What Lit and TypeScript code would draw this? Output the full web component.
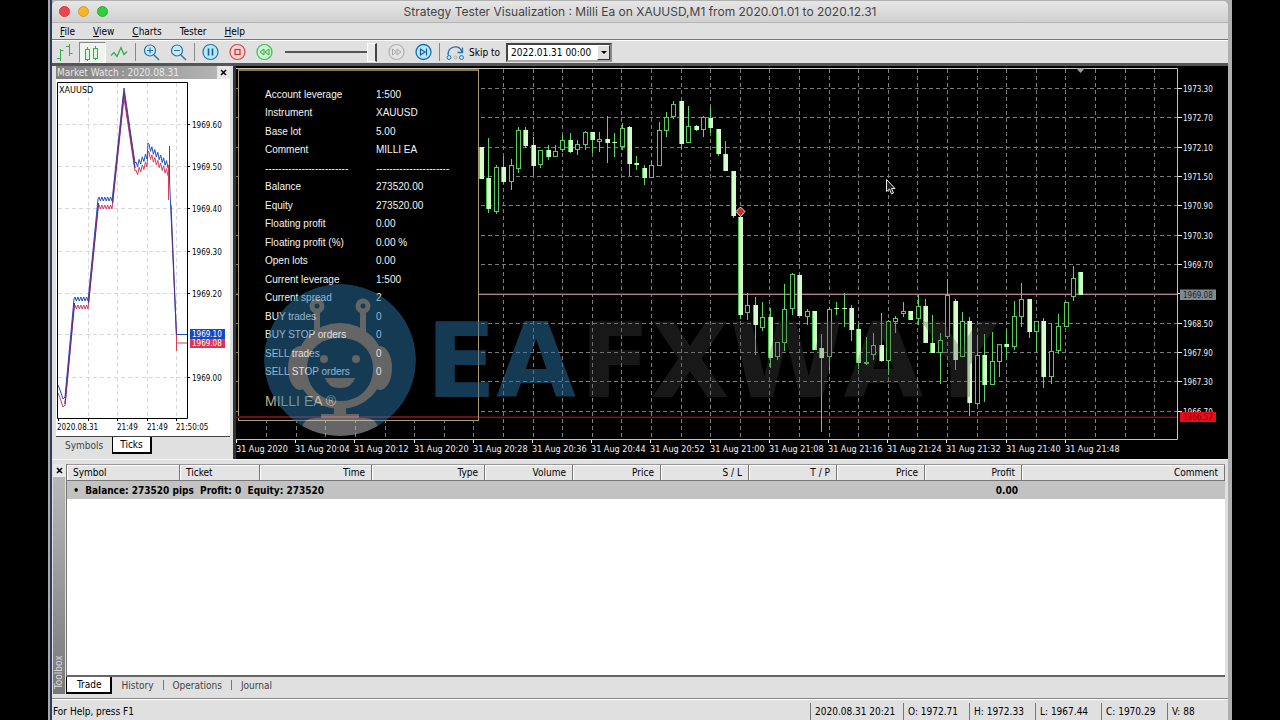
import { LitElement, html, css, svg } from "lit";
import { customElement, state } from "lit/decorators.js";

const UI_FONT = css`"DejaVu Sans Condensed", "DejaVu Sans", sans-serif`;

/* high, body top, body bottom, low, 1 = falling (solid) */
type Candle = [number, number, number, number, number];

const FIRST_BAR = -35;
const CANDLES: Candle[] = [
  [147, 147, 179, 179, 1], [138, 178, 209, 213, 1], [165, 167, 212, 214, 0], [156, 167, 182, 184, 1],
  [159, 165, 182, 190, 0], [127, 130, 169, 173, 0], [127, 130, 146, 148, 1], [137, 145, 166, 175, 1],
  [150, 150, 165, 168, 0], [145, 150, 157, 160, 1], [145, 151, 157, 157, 0], [135, 140, 150, 152, 0],
  [133, 140, 152, 153, 1], [140, 144, 150, 155, 0], [131, 132, 145, 150, 0], [132, 132, 140, 153, 1],
  [132, 139, 142, 152, 0], [116, 139, 143, 163, 1], [133, 142, 143, 157, 1], [123, 128, 147, 150, 0],
  [126, 127, 164, 176, 1], [156, 163, 165, 170, 1], [165, 168, 178, 185, 1], [161, 165, 178, 178, 0],
  [122, 130, 166, 166, 0], [112, 117, 131, 137, 0], [101, 104, 117, 119, 0], [101, 101, 144, 149, 1],
  [106, 126, 143, 143, 0], [125, 126, 130, 131, 1], [116, 117, 130, 137, 0], [107, 118, 128, 133, 1],
  [129, 129, 154, 156, 1], [141, 154, 171, 171, 1], [171, 171, 216, 218, 1], [216, 217, 315, 319, 1],
  [293, 305, 313, 320, 0], [297, 305, 325, 355, 1], [302, 317, 328, 331, 0], [308, 317, 358, 368, 1],
  [342, 342, 357, 360, 0], [284, 309, 343, 351, 0], [273, 274, 309, 315, 0], [274, 275, 316, 316, 1],
  [309, 311, 317, 325, 0], [311, 311, 350, 350, 1], [334, 348, 358, 432, 1], [307, 309, 357, 370, 0],
  [302, 308, 309, 315, 1], [293, 308, 309, 327, 1], [305, 308, 330, 341, 1], [324, 329, 363, 369, 1],
  [337, 362, 364, 365, 0], [333, 345, 355, 360, 0], [313, 345, 361, 362, 1], [320, 321, 361, 375, 0],
  [316, 318, 322, 333, 0], [302, 311, 314, 317, 0], [311, 311, 320, 320, 1], [295, 306, 319, 325, 0],
  [299, 306, 343, 343, 1], [315, 343, 353, 353, 1], [333, 340, 353, 384, 0], [279, 295, 337, 339, 0],
  [299, 301, 360, 370, 1], [312, 321, 357, 357, 0], [317, 321, 403, 416, 1], [335, 355, 404, 405, 0],
  [334, 355, 385, 402, 1], [332, 361, 385, 385, 0], [344, 344, 362, 377, 0], [329, 344, 347, 360, 1],
  [301, 316, 347, 350, 0], [283, 299, 317, 327, 0], [299, 299, 332, 338, 1], [321, 321, 332, 352, 0],
  [318, 321, 377, 388, 1], [323, 351, 377, 384, 0], [314, 326, 351, 354, 0], [302, 302, 327, 327, 0],
  [266, 278, 297, 301, 0], [272, 272, 295, 295, 1],
];

const PRICES = ["1973.30", "1972.70", "1972.10", "1971.50", "1970.90", "1970.30", "1969.70", "", "1968.50", "1967.90", "1967.30", "1966.70"];
const TIMES = ["31 Aug 2020", "31 Aug 20:04", "31 Aug 20:12", "31 Aug 20:20", "31 Aug 20:28", "31 Aug 20:36", "31 Aug 20:44", "31 Aug 20:52", "31 Aug 21:00", "31 Aug 21:08", "31 Aug 21:16", "31 Aug 21:24", "31 Aug 21:32", "31 Aug 21:40", "31 Aug 21:48"];

const INFO: [string, string][] = [
  ["Account leverage", "1:500"], ["Instrument", "XAUUSD"], ["Base lot", "5.00"], ["Comment", "MILLI EA"],
  ["-------------------------", "----------------------"],
  ["Balance", "273520.00"], ["Equity", "273520.00"], ["Floating profit", "0.00"], ["Floating profit (%)", "0.00 %"],
  ["Open lots", "0.00"], ["Current leverage", "1:500"], ["Current spread", "2"], ["BUY trades", "0"],
  ["BUY STOP orders", "0"], ["SELL trades", "0"], ["SELL STOP orders", "0"],
];

@customElement("price-chart")
export class PriceChart extends LitElement {
  static styles = css`
    :host { display: block; position: relative; background: #000; overflow: hidden; }
    .plot { display: block; width: 100%; height: 100%; }
    .axis { font: 8px ${UI_FONT}; fill: #f2f2f2; }
    .time { font: 9px ${UI_FONT}; fill: #f2f2f2; }
    .on-bid { fill: #1c2228; }
    .on-stop { fill: #7c0000; }
    .brand { font: 700 103px "DejaVu Sans", sans-serif; font-kerning: none; }
    .panel {
      position: absolute; left: 2px; top: 3px; width: 241px; height: 352px; box-sizing: border-box;
      border: 1px solid #a89b72; border-top: 2px solid #8a7436; background: #000;
      padding: 14px 0 0 26px; color: #f4f4f4; font: 10px "Liberation Sans", Arial, sans-serif;
    }
    .facts { display: grid; grid-template-columns: 111px 1fr; grid-template-rows: repeat(16, 1fr); align-items: center; height: 296px; margin: 0; white-space: nowrap; overflow: hidden; }
    .facts dd { margin: 0; }
    .name { margin: 8px 0 0; font: 14px/24px "Liberation Sans", Arial, sans-serif; color: #c0b283; }
    .overlay { position: absolute; inset: 0; width: 100%; height: 100%; pointer-events: none; }
  `;

  render() {
    const gx = Array.from({ length: 31 }, (_, i) => Math.round(503.5 + 29.6 * (i - 8) - 0.5) + 0.5);
    const gy = PRICES.map((_, i) => Math.round(88.3 + 29.35 * i - 0.5) + 0.5);
    return html`
      <svg class="plot" viewBox="236 66 991 393" preserveAspectRatio="xMinYMin meet" role="img" aria-label="XAUUSD M1 candlestick chart">
        <g stroke="#7c7c7c" stroke-width="1" stroke-dasharray="4 3">
          ${gx.map((x) => svg`<line x1=${x} x2=${x} y1="69" y2="438" />`)}
          ${gy.map((y) => svg`<line x1="236" x2="1177" y1=${y} y2=${y} />`)}
        </g>
        <path d="M236 293.5H1178M236 417.5H1178" stroke="#8c1018" fill="none" />
        <path d="M236 416.5H1178" stroke="#3c0408" fill="none" />
        <path d="M236 294.5H1178" stroke="#b48088" fill="none" />
        <g shape-rendering="crispEdges">
          ${CANDLES.map(([h, t, b, l, solid], i) => {
            const x = Math.floor(740.5 + 7.4 * (FIRST_BAR + i));
            return svg`
              <rect x=${x} y=${h} width="1" height=${Math.max(1, l - h)} fill="#5cd65c" />
              ${solid
                ? svg`<rect x=${x - 2} y=${t} width="5" height=${Math.max(1, b - t)} fill="#48c848" />
                      <rect x=${x - 1} y=${t} width="4" height=${Math.max(1, b - t)} fill="#d2ffc8" />`
                : svg`<rect x=${x - 1.5} y=${t + 0.5} width="4" height=${Math.max(1, b - t - 1)} fill="#000" stroke="#58cc58" />`}`;
          })}
        </g>
        <path d="M236 68.5H1177.5V439.5H236" stroke="#c4c4c4" stroke-width="1" fill="none" />
        <path d="M1076 68h9l-4.500 5z" fill="#a0a0a0" />
        <path d="M740.500 207l4.500 4.500-4.500 5-4.500-5z" fill="#c03030" stroke="#f4dcdc" />
        ${gy.map((y, i) => svg`<path d="M1178 ${y}h4" stroke="#eee" /><text class="axis" x="1183" y=${y + 3}>${PRICES[i]}</text>`)}
        ${TIMES.map((t, i) => {
          const x = Math.round(236 + 59.2 * i);
          return svg`<path d="M${x + 0.5} 440v3" stroke="#eee" /><text class="time" x=${x} y="452">${t}</text>`;
        })}
        <rect x="1180" y="289" width="36" height="11" fill="#7e8a90" /><path d="M1180 289.500h36" stroke="#a01820" />
        <text class="axis on-bid" x="1183" y="298">1969.08</text>
        <rect x="1180" y="412" width="36" height="10" fill="#e80c1c" />
        <text class="axis on-stop" x="1183" y="420">1966.57</text>
      </svg>
      <section class="panel">
        <dl class="facts">${INFO.map(([k, v]) => html`<dt>${k}</dt><dd>${v}</dd>`)}</dl>
        <p class="name">MILLI EA ®</p>
      </section>
      <svg class="overlay" viewBox="236 66 991 393" preserveAspectRatio="xMinYMin meet">
        <path d="M238 417H478" stroke="#6c1018" stroke-width="2" />
        <clipPath id="disc"><circle cx="340" cy="360" r="76" /></clipPath>
        <g opacity=".5" clip-path="url(#disc)">
          <circle cx="340" cy="360" r="76" fill="#2874a8" />
          <g fill="#cacaca">
            <path d="M314 311h6v22h-6zM360 311h6v22h-6z" />
            <circle cx="317" cy="306" r="7.500" /><circle cx="363" cy="306" r="7.500" />
            <ellipse cx="300" cy="368" rx="12" ry="22" /><ellipse cx="380" cy="368" rx="12" ry="22" />
            <ellipse cx="340" cy="366" rx="44" ry="43" />
            <rect x="334" y="406" width="12" height="10" />
            <rect x="321" y="414" width="38" height="5" />
            <path d="M302 427q2-9 14-9h48q12 0 14 9v12h-76z" />
          </g>
          <g fill="#2874a8">
            <circle cx="317" cy="306" r="2.500" /><circle cx="363" cy="306" r="2.500" />
            <path d="M340 338c20 0 33 12 33 31s-14 32-33 32-33-13-33-32 13-31 33-31z" />
          </g>
          <g fill="#cacaca"><circle cx="324" cy="359" r="4" /><circle cx="356" cy="359" r="4" /><path d="M325 378h30q-3 10-15 10t-15-10z" /></g>
        </g>
        <text class="brand" x="426" y="397" fill="#2874a8" opacity=".5">EA</text>
        <text class="brand" x="580" y="397" fill="#525252" opacity=".3">FXWAY</text>
        <path d="M886.500 179.500v12l3-2.500 2 5 2-1-2-4.500h3.500z" fill="#222" stroke="#e8e8e8" />
      </svg>
    `;
  }
}

@customElement("tick-chart")
export class TickChart extends LitElement {
  static styles = css`
    :host { display: block; }
    .plot { display: block; width: 100%; }
    .label { font: 8px ${UI_FONT}; fill: #000; }
    .symbol { font: 9px ${UI_FONT}; fill: #000; }
    .inverse { fill: #fff; }
  `;

  private zigzag(x0: number, y0: number, x1: number, y1: number, amp: number) {
    const n = Math.round((x1 - x0) / 1.5);
    return Array.from({ length: n + 1 }, (_, i) => {
      const x = x0 + ((x1 - x0) * i) / n;
      const y = y0 + ((y1 - y0) * i) / n + (i % 2 ? amp : -amp);
      return `L${x.toFixed(1)} ${y.toFixed(1)}`;
    }).join("");
  }

  private series(d: number, peak: number) {
    return `M58 ${385 + d}L60 ${390 + d}L63 ${399 + d}L65 ${397 + d}L74 ${299 + d}` +
      this.zigzag(75, 299 + d, 88, 299 + d, 2) + `L98 ${199 + d}` +
      this.zigzag(99, 199 + d, 112, 199 + d, 2) + `L124 ${peak}L135 ${163 + d}` +
      this.zigzag(136, 165 + d, 147, 156 + d, 3) + `L148 ${143 + d}` +
      this.zigzag(149, 147 + d, 168, 165 + d, 3);
  }

  render() {
    const rows: [number, string][] = [[124.5, "1969.60"], [166.5, "1969.50"], [208.5, "1969.40"], [251.5, "1969.30"], [293.5, "1969.20"], [334.5, ""], [377.5, "1969.00"]];
    const cols: [number, number, string][] = [[58.5, 57, "2020.08.31"], [88.5, 0, ""], [117.5, 117, "21:49"], [147.5, 147, "21:49"], [176.5, 176, "21:50:05"]];
    return html`
      <svg class="plot" viewBox="56 81 174 355" role="img" aria-label="XAUUSD ticks">
        <g stroke="#d8d8d8" stroke-dasharray="4 3">
          ${rows.map(([y]) => svg`<line x1="58" x2="187" y1=${y} y2=${y} />`)}
          ${cols.slice(1).map(([x]) => svg`<line x1=${x} x2=${x} y1="83" y2="418" />`)}
        </g>
        <path d=${this.series(8, 98)} fill="none" stroke="#d83c58" />
        <path d=${this.series(0, 88)} fill="none" stroke="#1c50c8" />
        <path d="M65 404L74.500 303M88.500 303L98.500 203M112.500 203L124 92L135 168" fill="none" stroke="#6c2c80" stroke-width="1.300" />
        <path d="M168.500 165v35" stroke="#d83c58" /><path d="M169.500 146v34L176.500 338V334.500H187" fill="none" stroke="#1c50c8" />
        <path d="M171 205L176.500 335" stroke="#5c2a80" /><path d="M176.500 335v16V343H187" stroke="#d83c58" fill="none" />
        <path d="M57.500 82.500H187.500V418.500H57.500z" fill="none" stroke="#000" />
        ${rows.map(([y, t]) => t ? svg`<path d="M187 ${y}h3" stroke="#000" /><text class="label" x="192" y=${y + 3}>${t}</text>` : "")}
        ${cols.map(([x, tx, t]) => svg`<path d="M${x} 418v3" stroke="#000" /><text class="label" x=${tx} y="430">${t}</text>`)}
        <rect x="190" y="339" width="35" height="9" fill="#dc3454" /><rect x="190" y="329" width="35" height="10" fill="#1448cc" />
        <text class="label inverse" x="192" y="337">1969.10</text><text class="label inverse" x="192" y="346">1969.08</text>
        <text class="symbol" x="59" y="93">XAUUSD</text>
      </svg>`;
  }
}

const glyph = {
  bars: svg`<g stroke="#2fae4a" fill="none"><path d="M5.500 7v12M2 16.500h3.500M5.500 8.500h3M14.500 2v12M11 4.500h3.500M14.500 11.500h3" /></g>`,
  candles: svg`<g stroke="#2fae4a" fill="#d8f8d8"><path d="M5.500 4v14M13.500 3v14" /><rect x="3.500" y="6.500" width="4" height="10" /><rect x="11.500" y="5.500" width="4" height="10" /></g>`,
  line: svg`<path d="M2 13.500l3-3 3 4 4-9 3 7 3-3" fill="none" stroke="#2fae4a" stroke-width="1.300" />`,
  zoomIn: svg`<path d="M13 13l5 5" stroke="#3a78a8" stroke-width="1.600" /><circle cx="9" cy="8.500" r="5.500" fill="#c4ecfc" stroke="#2a6ea4" stroke-width="1.200" /><path d="M6 8.500h6M9 5.500v6" stroke="#2a6ea4" stroke-width="1.200" />`,
  zoomOut: svg`<path d="M13 13l5 5" stroke="#3a78a8" stroke-width="1.600" /><circle cx="9" cy="8.500" r="5.500" fill="#c4ecfc" stroke="#2a6ea4" stroke-width="1.200" /><path d="M6 8.500h6" stroke="#2a6ea4" stroke-width="1.200" />`,
  pause: svg`<circle cx="10.500" cy="10" r="7.500" fill="#b4e8fc" stroke="#2a72a8" stroke-width="1.200" /><path d="M8.500 6.500v7M12.500 6.500v7" stroke="#1c5c94" stroke-width="1.600" />`,
  stop: svg`<circle cx="10.500" cy="10" r="7.500" fill="#fcd4d4" stroke="#cc4848" stroke-width="1.200" /><rect x="8" y="7.500" width="5" height="5" fill="none" stroke="#cc3030" stroke-width="1.200" />`,
  slower: svg`<circle cx="10.500" cy="10" r="7.500" fill="#ccfad0" stroke="#38b850" stroke-width="1.200" /><path d="M10 7v6l-4-3zM15 7v6l-4-3z" fill="none" stroke="#2ca444" />`,
  faster: svg`<circle cx="10.500" cy="10" r="7.500" fill="#e4e4e4" stroke="#b0b0b0" stroke-width="1.200" /><path d="M6.500 7v6l4-3zM11 7v6l4-3z" fill="none" stroke="#a8a8a8" />`,
  next: svg`<circle cx="10.500" cy="10" r="7.500" fill="#b4e8fc" stroke="#1c70ac" stroke-width="1.300" /><path d="M7.500 7v6l4.500-3zM13.500 6.500v7" fill="none" stroke="#1c5c94" stroke-width="1.200" />`,
  skip: svg`<path d="M3 13c0-9 11-11 14-3M17.500 5.500v5h-5" fill="none" stroke="#2a72a8" stroke-width="1.300" /><circle cx="4" cy="15.500" r="2" fill="#b4e8fc" stroke="#2a72a8" /><circle cx="10.500" cy="15.500" r="1.500" fill="none" stroke="#aaa" /><circle cx="16.500" cy="15.500" r="2" fill="#b4e8fc" stroke="#2a72a8" />`,
};

@customElement("app-root")
export class AppRoot extends LitElement {
  @state() private view = "Trade";

  static styles = css`
    :host { display: block; min-height: 100vh; background: #000; font: 10px ${UI_FONT}; color: #000; }
    * { box-sizing: border-box; }
    button, select { font: inherit; color: inherit; border: 0; background: none; padding: 0; margin: 0; }
    .desk { display: flex; flex-direction: column; min-height: 100vh; margin: 0 48px; padding: 1px 4px 0; background: linear-gradient(90deg, #a8a8a8 0 2px, #2c3c60 2px 4px, #b0b0b0 4px); }
    .window { flex: 1; display: flex; flex-direction: column; background: #e0e0e0; border-radius: 5px 5px 0 0; overflow: hidden; }
    .title { display: flex; align-items: center; height: 22px; border-bottom: 1px solid #b4b4b4; background: linear-gradient(#e6e6e6, #d0d0d0); }
    .lights { display: flex; gap: 8px; padding-left: 7px; width: 56px; }
    .light { width: 11px; height: 11px; border-radius: 50%; background: #ee4450; border: 1px solid #d43c46; }
    .light.amber { background: #f8b42c; border-color: #dc9c24; }
    .light.green { background: #34cc40; border-color: #28b034; }
    .caption { flex: 1; margin: 0; padding-right: 56px; text-align: center; font: 12px/21px Inter, Roboto, sans-serif; color: #444; }
    .menu { display: flex; gap: 18px; height: 17px; padding-left: 8px; align-items: center; border-bottom: 1px solid #777; }
    .menu u { text-underline-offset: 1px; }
    .tools { display: flex; align-items: center; height: 23px; border-top: 1px solid #fff; }
    .tool { width: 27px; height: 21px; display: grid; place-items: center; }
    .tool.on { background: #eef4ee; border: 1px solid #fff; border-top-color: #888; border-left-color: #888; }
    .tool svg { display: block; width: 21px; height: 21px; }
    .sep { width: 1px; height: 18px; margin: 0 2px; background: #888; }
    .speed { appearance: none; width: 92px; height: 20px; margin: 0 6px 0 7px; background: linear-gradient(#555, #555) center / 100% 2px no-repeat; }
    .speed::-webkit-slider-thumb { appearance: none; width: 10px; height: 19px; background: #e8e8e8; border: 1px solid #fff; border-right: 2px solid #444; }
    .skip { display: flex; align-items: center; gap: 6px; }
    .combo { position: relative; display: flex; width: 106px; height: 19px; background: #fff; border: 2px solid #444; border-right-color: #888; border-bottom-color: #aaa; }
    .combo select { appearance: none; flex: 1; padding-left: 3px; outline: none; }
    .drop { position: absolute; right: 0; top: 0; width: 13px; height: 15px; background: #e0e0e0; border: 1px solid #fff; border-right-color: #333; border-bottom-color: #333; pointer-events: none; }
    .drop::after { content: ""; position: absolute; left: 3px; top: 5px; border: 3px solid transparent; border-top-color: #000; border-bottom: 0; }
    .work { display: grid; grid-template-columns: 184px 1fr; grid-template-rows: 393px; background: #e4e4e4; border-top: 3px solid #555; border-bottom: 1px solid #f4f4f4; }
    .watch { display: flex; flex-direction: column; padding: 0 3px 0 4px; border-right: 3px solid #333; background: #e0e0e0; }
    .watch-head { display: flex; align-items: center; justify-content: space-between; height: 13px; color: #e8e8e8; background: linear-gradient(90deg, #808080, #b8b8b8); }
    .watch-head h2 { margin: 0; font: inherit; padding-left: 1px; }
    .close { width: 13px; height: 13px; display: grid; place-items: center; color: #000; background: #e8e8e8; }
    .close svg { width: 7px; height: 7px; }
    .watch-body { background: #fff; padding-top: 2px; border-bottom: 1px solid #444; }
    .tabs { display: flex; height: 18px; }
    .tabs button { display: flex; align-items: center; padding: 0 9px; height: 17px; color: #444; }
    .tabs button.on { background: #fff; color: #000; border: 1px solid #000; border-top: 0; border-right-width: 2px; border-bottom-width: 2px; padding: 0 7px; }
    .toolbox { display: grid; grid-template-columns: 14px 1fr; flex: 1; margin-top: 4px; padding: 0 3px 4px 0; border-bottom: 1px solid #888; }
    .rail { display: flex; flex-direction: column; align-items: center; padding: 0 1px; }
    .grip { flex: 1; width: 12px; color: #d8d8d8; background: linear-gradient(#787878, #b8b8b8); writing-mode: vertical-rl; transform: rotate(180deg); line-height: 12px; padding-top: 5px; }
    .pane { display: flex; flex-direction: column; min-width: 0; }
    .sheet { flex: 1; background: #fff; border-left: 1px solid #777; border-bottom: 2px solid #666; }
    table { width: 100%; table-layout: fixed; border-collapse: separate; border-spacing: 0; }
    th { height: 17px; padding: 0 6px; text-align: right; font-weight: normal; background: #e4e4e4; border: solid #777; border-width: 1px 1px 1px 0; border-top-color: #999; box-shadow: inset 1px 1px #fff; }
    th.start { text-align: left; }
    td { height: 18px; padding: 0 4px; background: #c2c2c2; font-weight: bold; text-align: right; white-space: pre; }
    td.start { text-align: left; padding-left: 3px; }
    .c80 { width: 80px; } .c88 { width: 88px; } .c97 { width: 97px; } .c112 { width: 112px; } .c113 { width: 113px; }
    .views { align-items: flex-start; height: 17px; }
    .views button.on { padding: 0 9px 0 10px; }
    .bar { width: 1px; height: 10px; margin-top: 3px; background: #777; }
    .status { display: flex; align-items: center; height: 21px; border-top: 1px solid #fff; padding: 3px 3px 0 1px; }
    .hint { flex: 1; margin: 0; }
    .cell { padding: 3px 4px 0; border-left: 1px solid #777; height: 17px; white-space: nowrap; }
    .date { width: 93px; } .ohlc { width: 66px; } .vol { width: 58px; }
  `;

  private tool(name: string, icon: unknown, on = false) {
    return html`<button class="tool ${on ? "on" : ""}" aria-label=${name}><svg viewBox="0 0 21 21">${icon}</svg></button>`;
  }

  private closeButton() {
    return html`<button class="close" aria-label="Close"><svg viewBox="0 0 7 7"><path d="M1 1l5 5M6 1L1 6" stroke="#000" stroke-width="1.600" /></svg></button>`;
  }

  render() {
    const heads: [string, string][] = [["Symbol", "c113 start"], ["Ticket", "c80 start"], ["Time", "c112"], ["Type", "c113"], ["Volume", "c88"], ["Price", "c88"], ["S / L", "c88"], ["T / P", "c88"], ["Price", "c88"], ["Profit", "c97"], ["Comment", ""]];
    const views = ["Trade", "History", "Operations", "Journal"];
    return html`
      <div class="desk"><div class="window">
        <header class="title">
          <div class="lights"><span class="light"></span><span class="light amber"></span><span class="light green"></span></div>
          <h1 class="caption">Strategy Tester Visualization : Milli Ea on XAUUSD,M1 from 2020.01.01 to 2020.12.31</h1>
        </header>
        <nav class="menu">
          <button><u>F</u>ile</button><button><u>V</u>iew</button><button><u>C</u>harts</button><button>Tester</button><button><u>H</u>elp</button>
        </nav>
        <div class="tools" role="toolbar">
          ${this.tool("Bar chart", glyph.bars)}${this.tool("Candlesticks", glyph.candles, true)}${this.tool("Line chart", glyph.line)}
          <span class="sep"></span>
          ${this.tool("Zoom in", glyph.zoomIn)}${this.tool("Zoom out", glyph.zoomOut)}
          <span class="sep"></span>
          ${this.tool("Pause", glyph.pause)}${this.tool("Stop", glyph.stop)}${this.tool("Slower", glyph.slower)}
          <input class="speed" type="range" min="0" max="100" value="100" aria-label="Speed" />
          ${this.tool("Faster", glyph.faster)}${this.tool("Next tick", glyph.next)}
          <span class="sep"></span>
          ${this.tool("Skip", glyph.skip)}
          <div class="skip">
            <label for="skip-to">Skip to</label>
            <span class="combo"><select id="skip-to"><option>2022.01.31 00:00</option></select><span class="drop"></span></span>
          </div>
        </div>
        <main class="work">
          <section class="watch">
            <div class="watch-head"><h2>Market Watch : 2020.08.31</h2>${this.closeButton()}</div>
            <div class="watch-body"><tick-chart></tick-chart></div>
            <div class="tabs"><button>Symbols</button><button class="on">Ticks</button></div>
          </section>
          <price-chart></price-chart>
        </main>
        <section class="toolbox">
          <div class="rail">${this.closeButton()}<span class="grip">Toolbox</span></div>
          <div class="pane">
            <div class="sheet">
              <table>
                <thead><tr>${heads.map(([t, c]) => html`<th class=${c}>${t}</th>`)}</tr></thead>
                <tbody><tr><td class="start" colspan="9"> •  Balance: 273520 pips  Profit: 0  Equity: 273520</td><td>0.00</td><td></td></tr></tbody>
              </table>
            </div>
            <div class="tabs views">
              ${views.map((v, i) => html`${i > 1 ? html`<span class="bar"></span>` : ""}<button class=${this.view === v ? "on" : ""} @click=${() => (this.view = v)}>${v}</button>`)}
            </div>
          </div>
        </section>
        <footer class="status">
          <p class="hint">For Help, press F1</p>
          <span class="cell date">2020.08.31 20:21</span><span class="cell ohlc">O: 1972.71</span><span class="cell ohlc">H: 1972.33</span><span class="cell ohlc">L: 1967.44</span><span class="cell ohlc">C: 1970.29</span><span class="cell vol">V: 88</span>
        </footer>
      </div></div>
    `;
  }
}
